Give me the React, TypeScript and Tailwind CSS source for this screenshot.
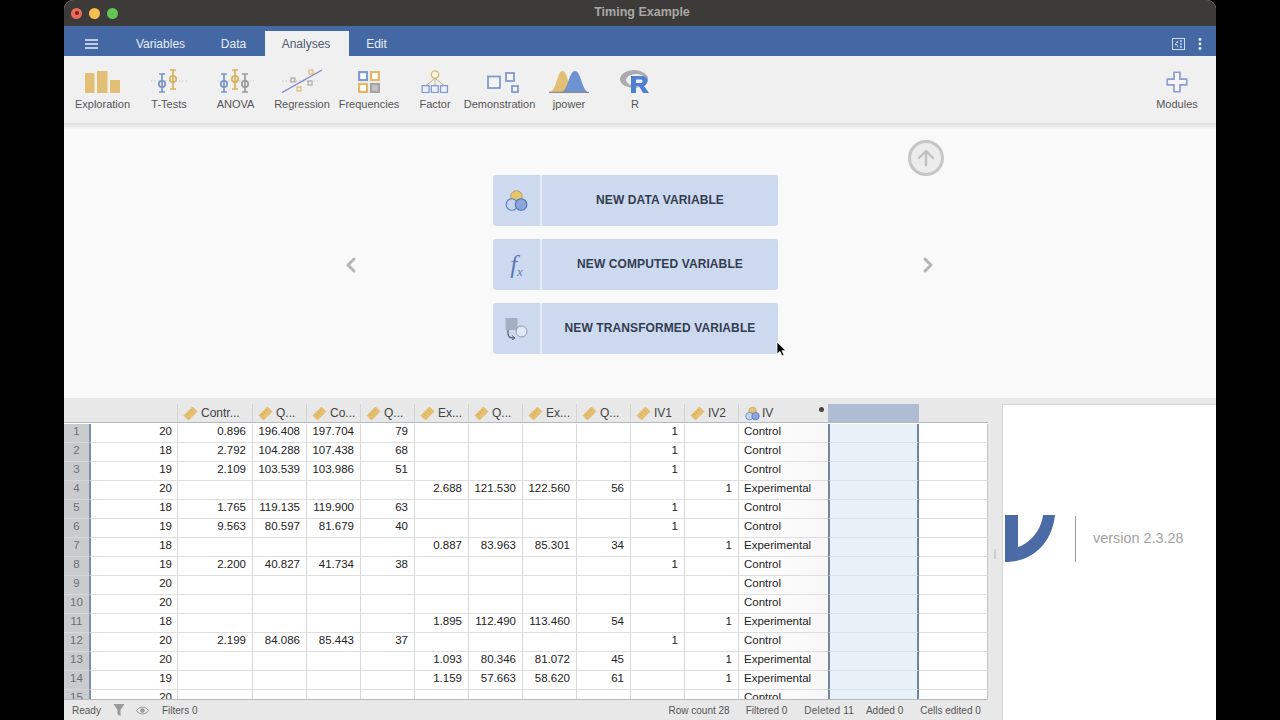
import type { ReactNode } from "react";
import { ArrowUp, ChevronLeft, ChevronRight } from "lucide-react";

const rows: string[][] = [
  ["20", "0.896", "196.408", "197.704", "79", "", "", "", "", "1", "", "Control"],
  ["18", "2.792", "104.288", "107.438", "68", "", "", "", "", "1", "", "Control"],
  ["19", "2.109", "103.539", "103.986", "51", "", "", "", "", "1", "", "Control"],
  ["20", "", "", "", "", "2.688", "121.530", "122.560", "56", "", "1", "Experimental"],
  ["18", "1.765", "119.135", "119.900", "63", "", "", "", "", "1", "", "Control"],
  ["19", "9.563", "80.597", "81.679", "40", "", "", "", "", "1", "", "Control"],
  ["18", "", "", "", "", "0.887", "83.963", "85.301", "34", "", "1", "Experimental"],
  ["19", "2.200", "40.827", "41.734", "38", "", "", "", "", "1", "", "Control"],
  ["20", "", "", "", "", "", "", "", "", "", "", "Control"],
  ["20", "", "", "", "", "", "", "", "", "", "", "Control"],
  ["18", "", "", "", "", "1.895", "112.490", "113.460", "54", "", "1", "Experimental"],
  ["20", "2.199", "84.086", "85.443", "37", "", "", "", "", "1", "", "Control"],
  ["20", "", "", "", "", "1.093", "80.346", "81.072", "45", "", "1", "Experimental"],
  ["19", "", "", "", "", "1.159", "57.663", "58.620", "61", "", "1", "Experimental"],
  ["20", "", "", "", "", "", "", "", "", "", "", "Control"],
];

const headers = ["Contr...", "Q...", "Co...", "Q...", "Ex...", "Q...", "Ex...", "Q...", "IV1", "IV2"];

const gridCols = "grid grid-cols-[25px_88px_75px_54px_54px_54px_54px_54px_54px_54px_54px_54px_90px_91px_69px]";

function Ruler() {
  return (
    <svg width="15" height="15" viewBox="0 0 15 15" className="shrink-0">
      <path d="M1 9.5 9.5 1 14 5.5 5.5 14Z" fill="#e6bf6e" stroke="#d8ae58" strokeWidth="0.6" />
      <path d="M4 8l1.2 1.2M6 6l1.2 1.2M8 4l1.2 1.2" stroke="#bb9242" strokeWidth="0.6" />
    </svg>
  );
}

function Nominal({ size = 15 }: { size?: number }) {
  return (
    <svg width={size} height={size} viewBox="0 0 20 20" className="shrink-0">
      <circle cx="10" cy="6.5" r="5" fill="#e7c46f" stroke="#b89a4d" strokeWidth="0.8" />
      <circle cx="6" cy="13.5" r="5" fill="#c5d3ee" stroke="#5b7fbd" strokeWidth="1" />
      <circle cx="14" cy="13.5" r="5" fill="#8ba6dc" stroke="#4f74b5" strokeWidth="1" />
    </svg>
  );
}

function Plot({ x, low, high, mid, color }: { x: number; low: number; high: number; mid: number; color: string }) {
  return (
    <g stroke={color} strokeWidth="1.7" fill="none">
      <path d={`M${x - 3} ${low}h6M${x - 3} ${high}h6M${x} ${low}V${mid - 3}M${x} ${mid + 3}V${high}`} />
      <circle cx={x} cy={mid} r="3.2" />
    </g>
  );
}

function ToolIcon({ name }: { name: string }) {
  if (name === "exploration")
    return (
      <svg width="35" height="22" viewBox="0 0 35 22">
        <rect x="0" y="2" width="9.5" height="20" fill="#e3bf75" />
        <rect x="12" y="0" width="10.5" height="22" fill="#e3bf75" />
        <rect x="25" y="9" width="10" height="13" fill="#e3bf75" />
      </svg>
    );
  if (name === "ttests")
    return (
      <svg width="40" height="26" viewBox="0 0 40 26">
        <path d="M2 14h36" stroke="#bbb" strokeWidth="0.8" strokeDasharray="1.5 2" />
        <Plot x={13} low={25} high={7} mid={17} color="#7b94c8" />
        <Plot x={24} low={22} high={3} mid={12} color="#d9b15f" />
      </svg>
    );
  if (name === "anova")
    return (
      <svg width="40" height="26" viewBox="0 0 40 26">
        <path d="M2 14h36" stroke="#bbb" strokeWidth="0.8" strokeDasharray="1.5 2" />
        <Plot x={8} low={25} high={7} mid={17} color="#7b94c8" />
        <Plot x={19} low={22} high={3} mid={12} color="#d9b15f" />
        <Plot x={29} low={25} high={7} mid={17} color="#9a9a9a" />
      </svg>
    );
  if (name === "regression")
    return (
      <svg width="44" height="26" viewBox="0 0 44 26">
        <path d="M2 14h36" stroke="#bbb" strokeWidth="0.8" strokeDasharray="1.5 2" />
        <path d="M2 25.5 42 3" stroke="#7f86c4" strokeWidth="1.4" />
        <rect x="11" y="11" width="4" height="4" fill="#eee" stroke="#9a9a9a" strokeWidth="1" />
        <rect x="17" y="20" width="4" height="4" fill="#eee" stroke="#d9b15f" strokeWidth="1" />
        <rect x="28" y="14" width="4" height="4" fill="#eee" stroke="#9a9a9a" strokeWidth="1" />
        <rect x="29" y="3" width="4" height="4" fill="#eee" stroke="#d9b15f" strokeWidth="1" />
      </svg>
    );
  if (name === "frequencies")
    return (
      <svg width="22" height="22" viewBox="0 0 24 24">
        <rect x="1.2" y="1.2" width="8.6" height="8.6" fill="#fff" stroke="#7f9bd0" strokeWidth="2.4" />
        <rect x="14.2" y="1.2" width="8.6" height="8.6" fill="#fff" stroke="#e0b868" strokeWidth="2.4" />
        <rect x="1.2" y="14.2" width="8.6" height="8.6" fill="#fff" stroke="#e0b868" strokeWidth="2.4" />
        <rect x="14.2" y="14.2" width="8.6" height="8.6" fill="#c4c4c4" stroke="#a5a5a5" strokeWidth="2.4" />
      </svg>
    );
  if (name === "factor")
    return (
      <svg width="28" height="23" viewBox="0 0 30 25">
        <path d="M15 9 5 17M15 9v8M15 9l10 8" stroke="#b0a876" strokeWidth="0.9" />
        <circle cx="15" cy="5" r="4" fill="#f7f3dc" stroke="#d4bb6c" strokeWidth="1.4" />
        <rect x="1" y="17" width="7.5" height="7.5" fill="#eef" stroke="#7f9bd0" strokeWidth="1.4" />
        <rect x="11" y="17" width="7.5" height="7.5" fill="#eef" stroke="#7f9bd0" strokeWidth="1.4" />
        <rect x="21" y="17" width="7.5" height="7.5" fill="#eef" stroke="#7f9bd0" strokeWidth="1.4" />
      </svg>
    );
  if (name === "demo")
    return (
      <svg className="ml-[7px]" width="32" height="21" viewBox="0 0 32 21">
        <rect x="1" y="4.5" width="12" height="11.5" fill="#f4f4f4" stroke="#7f9bd0" strokeWidth="1.8" />
        <rect x="19" y="1" width="8" height="8" fill="#f4f4f4" stroke="#7f9bd0" strokeWidth="1.8" />
        <rect x="25" y="14" width="6" height="6" fill="#f4f4f4" stroke="#7f9bd0" strokeWidth="1.8" />
      </svg>
    );
  if (name === "jpower")
    return (
      <svg width="40" height="23" viewBox="0 0 40 23">
        <path d="M1 22C8 20 8 1 13.5 1c5 0 6 17 11 21Z" fill="#e3bf75" />
        <path d="M13 22C19 20 20 1 26 1c6 0 7 19 13 21Z" fill="#6f92d2" />
        <path d="M0 22.4h40" stroke="#8a8a8a" strokeWidth="1.2" />
      </svg>
    );
  if (name === "r")
    return (
      <svg width="30" height="23" viewBox="0 0 30 23">
        <ellipse cx="14" cy="9" rx="14" ry="9" fill="#a9abb0" />
        <ellipse cx="16" cy="10" rx="10" ry="6" fill="#f0f0f0" />
        <path
          d="M11 6h11c7 0 7 8 2 10l5 7h-6l-4-7h-3v7h-5ZM16 9.5v3.5h5c2 0 2-3.5 0-3.5Z"
          fill="#4f7fd0"
          fillRule="evenodd"
        />
      </svg>
    );
  return (
    <svg width="22" height="22" viewBox="0 0 26 26">
      <path
        d="M9.5 1.5h7v8h8v7h-8v8h-7v-8h-8v-7h8Z"
        fill="#f5f5fa"
        stroke="#8d9fd0"
        strokeWidth="2"
      />
    </svg>
  );
}

function Tool({ icon, label, className }: { icon: string; label: string; className: string }) {
  return (
    <div className={`flex flex-col items-center ${className}`}>
      <div className="h-[28px] flex items-end justify-center">
        <ToolIcon name={icon} />
      </div>
      <span className="mt-[4px] text-[11px] leading-[14px] text-[#555] whitespace-nowrap">{label}</span>
    </div>
  );
}

function NewButton({ icon, label }: { icon: ReactNode; label: string }) {
  return (
    <div className="w-[285px] h-[51px] flex rounded-[3px] bg-[#cdd9ef]">
      <div className="w-[49px] flex items-center justify-center border-r-2 border-[#e6ecf7]">{icon}</div>
      <div className="flex-1 flex items-center justify-center pb-[2px] text-[12px] font-bold text-[#333d52] tracking-[0.1px]">
        {label}
      </div>
    </div>
  );
}

export default function App() {
  return (
    <div className="w-[1280px] h-[720px] bg-black flex justify-center overflow-hidden font-['Liberation_Sans',sans-serif]">
      <div className="w-[1152px] h-[720px] flex flex-col rounded-t-[9px] overflow-hidden bg-[#f0f0f0]">
        {/* title bar */}
        <div className="h-[26px] shrink-0 bg-[#3c3b39] flex items-center">
          <div className="flex items-center gap-[7px] pl-[7px]">
            <span className="w-[11px] h-[11px] rounded-full bg-[#ec6a5e] flex items-center justify-center">
              <span className="w-[4px] h-[4px] rounded-full bg-[#7e1f18]" />
            </span>
            <span className="w-[11px] h-[11px] rounded-full bg-[#f4bf4f]" />
            <span className="w-[11px] h-[11px] rounded-full bg-[#61c554]" />
          </div>
          <span className="flex-1 text-center pr-[50px] pb-[2px] text-[12.5px] font-bold text-[#a9a8a6]">Timing Example</span>
        </div>

        {/* tab bar */}
        <div className="h-[30px] shrink-0 bg-[#4468a3] flex items-end pt-[5px] text-[12px] text-[#e6ecf7]">
          <div className="w-[54px] h-full flex items-center justify-center">
            <svg width="13" height="10" viewBox="0 0 13 10">
              <path d="M0 1h13M0 5h13M0 9h13" stroke="#e8eefa" strokeWidth="1.6" />
            </svg>
          </div>
          <div className="w-[85px] h-full flex items-center justify-center">Variables</div>
          <div className="w-[61px] h-full flex items-center justify-center">Data</div>
          <div className="w-[84px] ml-[1px] h-full flex items-center justify-center pr-[2px] bg-[#f0f0f0] text-[#4f5a6e]">Analyses</div>
          <div className="w-[55px] h-full flex items-center justify-center">Edit</div>
          <div className="flex-1" />
          <div className="h-full flex items-center gap-[13px] pr-[14px]">
            <svg width="13" height="12" viewBox="0 0 13 12">
              <rect x="0.5" y="0.5" width="12" height="11" fill="none" stroke="#cfdcf3" />
              <path d="M6 3.5 3.5 6 6 8.5M9 2v8" stroke="#e8eefa" strokeWidth="1.2" fill="none" strokeDasharray="2 1" />
            </svg>
            <svg width="4" height="12" viewBox="0 0 4 12">
              <circle cx="2" cy="1.5" r="1.4" fill="#e8eefa" />
              <circle cx="2" cy="6" r="1.4" fill="#e8eefa" />
              <circle cx="2" cy="10.5" r="1.4" fill="#e8eefa" />
            </svg>
          </div>
        </div>

        {/* ribbon */}
        <div className="h-[67px] shrink-0 bg-[#f0f0f0] flex items-start pt-[9px] pl-[5px]">
          <Tool icon="exploration" label="Exploration" className="w-[67px]" />
          <Tool icon="ttests" label="T-Tests" className="w-[66px]" />
          <Tool icon="anova" label="ANOVA" className="w-[67px]" />
          <Tool icon="regression" label="Regression" className="w-[66px]" />
          <Tool icon="frequencies" label="Frequencies" className="w-[68px]" />
          <Tool icon="factor" label="Factor" className="w-[64px]" />
          <Tool icon="demo" label="Demonstration" className="w-[65px]" />
          <Tool icon="jpower" label="jpower" className="w-[74px]" />
          <Tool icon="r" label="R" className="w-[58px]" />
          <div className="flex-1" />
          <Tool icon="modules" label="Modules" className="w-[66px] mr-[6px]" />
        </div>
        <div className="h-[6px] shrink-0 bg-gradient-to-b from-[#dcdcdc] to-[#f6f6f6]" />

        {/* variable editor */}
        <div className="h-[269px] shrink-0 bg-[#f9f9f9] relative flex items-start pt-[46px]">
          <div className="w-[429px] h-[179px] flex items-center justify-end pr-[130px]">
            <ChevronLeft size={24} strokeWidth={3} className="text-[#b5b5b5]" />
          </div>
          <div className="flex flex-col gap-[13px]">
            <NewButton icon={<Nominal size={23} />} label="NEW DATA VARIABLE" />
            <NewButton
              icon={<span className="font-['Liberation_Serif',serif] italic text-[25px] leading-none text-[#5a78b8]">f<sub className="text-[12px]">x</sub></span>}
              label="NEW COMPUTED VARIABLE"
            />
            <NewButton
              icon={
                <svg width="23" height="22" viewBox="0 0 23 22">
                  <rect x="0.5" y="0" width="12" height="12" fill="#a5afc2" />
                  <circle cx="16.5" cy="13.5" r="5.5" fill="#dfe6f4" stroke="#8e98ac" strokeWidth="1" />
                  <path d="M3 12v4c0 3 3 4 6 4" fill="none" stroke="#555f73" strokeWidth="1.3" />
                  <path d="M7 17.5 10 20l-3 2" fill="none" stroke="#555f73" strokeWidth="1" />
                </svg>
              }
              label="NEW TRANSFORMED VARIABLE"
            />
          </div>
          <div className="ml-[138px] h-[179px] flex items-center">
            <ChevronRight size={24} strokeWidth={3} className="text-[#b5b5b5]" />
          </div>
          <div className="absolute left-[844px] top-[11px] w-[36px] h-[36px] rounded-full border-[3px] border-[#c6c6c6] bg-[#ececec] flex items-center justify-center">
            <ArrowUp size={24} strokeWidth={2.4} className="text-[#c0c0c0]" />
          </div>
          {/* mouse cursor */}
          <svg className="absolute left-[712px] top-[212px]" width="12" height="17" viewBox="0 0 12 17">
            <path d="M1 1v12l3-2.6 2 4.6 2-.9-2-4.4h4Z" fill="#000" stroke="#fff" strokeWidth="0.8" />
          </svg>
        </div>

        {/* data + info panel */}
        <div className="flex-1 min-h-0 flex bg-[#e8e8e8]">
          <div className="w-[938px] flex flex-col">
            <div className="flex-1 min-h-0 flex">
              <div className="w-[924px] flex flex-col pt-[6px] overflow-hidden">
                <div className={`${gridCols} h-[18px] shrink-0 text-[12px] leading-[18px] text-[#444]`}>
                  <div />
                  <div />
                  {headers.map((h, i) => (
                    <div
                      key={i}
                      className="flex items-center gap-[3px] pl-[5px] border-l border-[#d4d4d4] whitespace-nowrap overflow-hidden"
                    >
                      <Ruler />
                      {h}
                    </div>
                  ))}
                  <div className="flex items-center gap-[2px] pl-[6px] border-l border-[#d4d4d4] relative">
                    <Nominal />
                    IV
                    <span className="absolute right-[4px] top-[3px] w-[5px] h-[5px] rounded-full bg-[#444]" />
                  </div>
                  <div className="bg-[#aebdd2]" />
                  <div />
                </div>
                <div className="flex-1 min-h-0 overflow-hidden border-t border-b border-[#b4b8bf] pt-px bg-white">
                  {rows.map((row, r) => (
                    <div key={r} className={`${gridCols} h-[19px] text-[11.5px] leading-[14px] text-[#222]`}>
                      <div className="bg-[#c9cbcd] text-[#6b7076] text-center border-b border-[#d8d8d8]">{r + 1}</div>
                      {row.map((cell, c) => (
                        <div
                          key={c}
                          className={
                            c === 0
                              ? "bg-white border-l-2 border-l-[#7a8fb0] border-b border-b-[#dedede] text-right pr-[5px]"
                              : c === 11
                                ? "bg-gradient-to-r from-white to-[#f7f7f7] border-l border-l-[#d8d8d8] border-b border-b-[#dedede] pl-[5px]"
                                : "bg-white border-l border-l-[#d8d8d8] border-b border-b-[#dedede] text-right pr-[6px]"
                          }
                        >
                          {cell}
                        </div>
                      ))}
                      <div className="bg-[#e8f0f8] border-x-2 border-x-[#73849c] border-b border-b-[#d9e1ea]" />
                      <div className="bg-white border-r border-r-[#c4c4c4] border-b border-b-[#dedede]" />
                    </div>
                  ))}
                </div>
              </div>
              <div className="w-[14px] flex items-center justify-center pt-[10px]">
                <span className="w-[2px] h-[10px] bg-[#cfcfcf]" />
              </div>
            </div>

            {/* status bar */}
            <div className="h-[20px] shrink-0 flex items-center text-[10px] text-[#555]">
              <span className="ml-[8px]">Ready</span>
              <svg className="ml-[12px]" width="12" height="14" viewBox="0 0 12 14">
                <path d="M0.5 1h11L7.5 7v6l-3-1.5V7Z" fill="#9a9a9a" />
              </svg>
              <svg className="ml-[11px]" width="13" height="9" viewBox="0 0 13 9">
                <path d="M0.5 4.5C3 0 10 0 12.5 4.5 10 9 3 9 0.5 4.5Z" fill="none" stroke="#999" />
                <circle cx="6.5" cy="4.5" r="2.2" fill="#999" />
              </svg>
              <span className="ml-[13px]">Filters 0</span>
              <span className="ml-[471px]">Row count 28</span>
              <span className="ml-[16px]">Filtered 0</span>
              <span className="ml-[17px] tracking-[0.2px]">Deleted 11</span>
              <span className="ml-[12px]">Added 0</span>
              <span className="ml-[17px]">Cells edited 0</span>
            </div>
          </div>

          <div className="flex-1 mt-[6px] bg-white border-l border-t border-[#d6d6d6] flex items-center pl-[2px] pb-[48px]">
            <svg width="50" height="48" viewBox="0 0 50 48" className="shrink-0">
              <path d="M0 0H13V32C25 28 36 16 38 0H50C47 28 28 47 0 47Z" fill="#4a6ba6" />
            </svg>
            <span className="w-px h-[46px] bg-[#999] ml-[20px]" />
            <span className="ml-[17px] text-[14.4px] text-[#a2a2a2] whitespace-nowrap">version 2.3.28</span>
          </div>
        </div>
      </div>
    </div>
  );
}
